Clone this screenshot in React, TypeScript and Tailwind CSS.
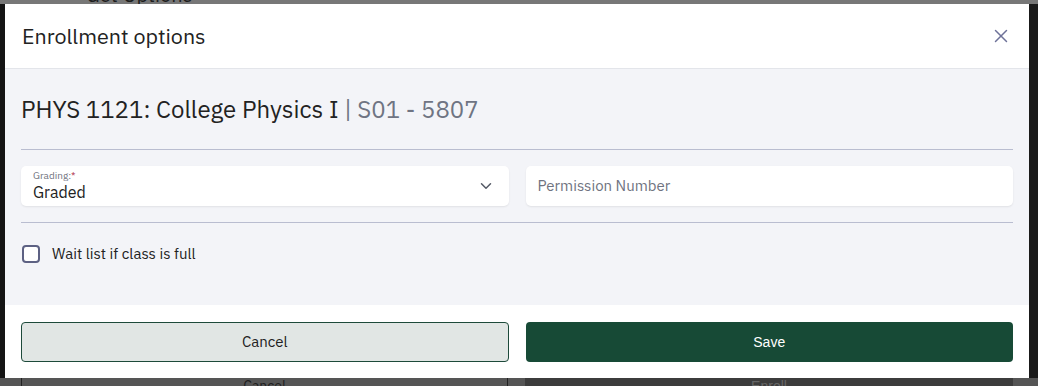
import { ChevronDown, X } from 'lucide-react';

export default function App() {
  return (
    <div className="flex h-[386px] w-[1038px] flex-col overflow-hidden bg-[#555555] font-['IBM_Plex_Sans','Noto_Sans',sans-serif]">
      {/* Dimmed page behind the dialog */}
      <div className="h-[4px] shrink-0 overflow-hidden bg-[#777777] pl-[60px]">
        <div className="-mt-[15px] text-[20px] leading-[20px] text-[#1e1e1e]">←&nbsp;&nbsp;Get Options</div>
      </div>

      <div className="flex h-[374px] shrink-0">
        <div className="w-[5px] shrink-0 bg-[#141414]" />

        {/* Dialog */}
        <div className="flex w-[1024px] shrink-0 flex-col bg-white">
          <div className="flex h-[65px] shrink-0 items-center justify-between border-b border-[#e3e5ea] pl-[17px] pr-[17px]">
            <h2 className="text-[21.5px] text-[#222222]">Enrollment options</h2>
            <button type="button" aria-label="Close" className="text-[#6e7299]">
              <X className="h-[22px] w-[22px]" strokeWidth={1.6} />
            </button>
          </div>

          <div className="flex h-[236px] shrink-0 flex-col bg-[#f3f4f8] px-[16px] pt-[24px]">
            <h3 className="text-[24px] leading-[32px] text-[#222222]">
              PHYS 1121: College Physics I <span className="text-[#6f7483]">| S01 - 5807</span>
            </h3>

            <div className="mt-[24px] border-t border-[#b9bdd0]" />

            <div className="mt-[16px] grid grid-cols-2 gap-[17px]">
              <div className="flex h-[40px] items-center justify-between rounded-[5px] bg-white pl-[12px] pr-[14px] shadow-[0_1px_2px_rgba(0,0,0,0.08)]">
                <div className="flex flex-col">
                  <span className="text-[10px] leading-[12px] text-[#6f7380]">
                    Grading:<span className="text-[#b0364c]">*</span>
                  </span>
                  <span className="text-[16px] leading-[20px] text-[#222222]">Graded</span>
                </div>
                <ChevronDown className="h-[18px] w-[18px] text-[#555a66]" strokeWidth={2} />
              </div>
              <div className="flex h-[40px] items-center rounded-[5px] bg-white px-[12px] shadow-[0_1px_2px_rgba(0,0,0,0.08)]">
                <span className="text-[15px] text-[#6f7380]">Permission Number</span>
              </div>
            </div>

            <div className="mt-[16px] border-t border-[#b9bdd0]" />

            <label className="mt-[20px] flex items-center gap-[12px] pl-[1px]">
              <span className="h-[18px] w-[18px] rounded-[4px] border-2 border-[#5d6183] bg-white" />
              <span className="text-[15px] text-[#222222]">Wait list if class is full</span>
            </label>
          </div>

          <div className="grid flex-1 grid-cols-2 gap-[17px] px-[16px] pt-[17px]">
            <button
              type="button"
              className="h-[40px] rounded-[4px] border border-[#1d4a3a] bg-[#e1e6e4] text-[15px] text-[#222222]"
            >
              Cancel
            </button>
            <button
              type="button"
              className="h-[40px] rounded-[4px] bg-[#174a36] font-['Liberation_Sans',Arial,sans-serif] text-[14px] text-white"
            >
              Save
            </button>
          </div>
        </div>

        <div className="flex-1 bg-[#1a1a1a]" />
      </div>

      {/* Page buttons peeking below the dialog */}
      <div className="flex h-[8px] shrink-0 gap-[17px] overflow-hidden bg-[#555555] pl-[21px] pr-[25px]">
        <div className="flex h-[40px] w-[487px] justify-center border-x border-[#222222] text-[14px] leading-[16px] text-[#1e1e1e]">
          Cancel
        </div>
        <div className="flex h-[40px] flex-1 justify-center bg-[#3c3c3c] font-['Liberation_Sans',Arial,sans-serif] text-[14px] leading-[16px] text-[#666666]">
          Enroll
        </div>
      </div>
    </div>
  );
}
